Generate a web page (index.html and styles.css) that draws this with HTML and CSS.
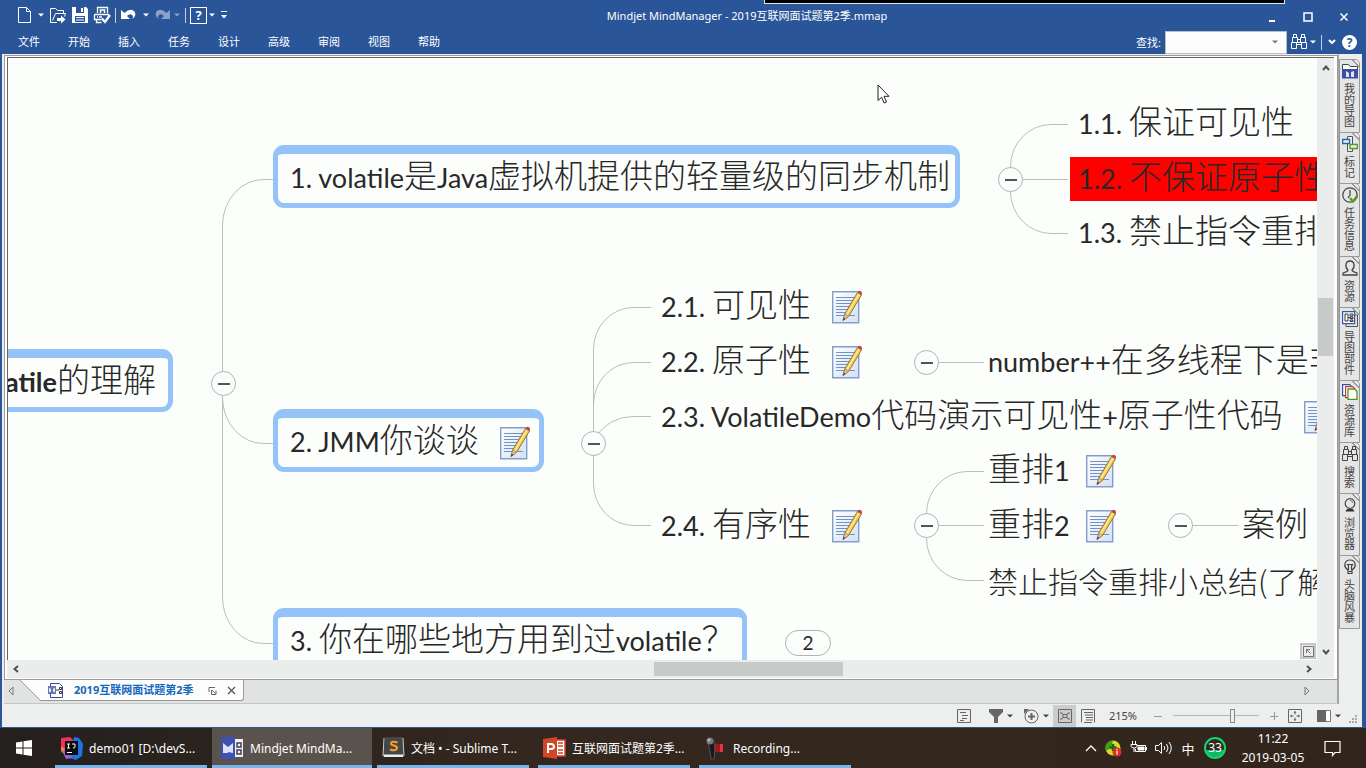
FILE: index.html
```html
<!DOCTYPE html>
<html lang="zh-CN">
<head>
<meta charset="utf-8">
<title>Mindjet MindManager - 2019互联网面试题第2季.mmap</title>
<link rel="stylesheet" href="styles.css">
</head>
<body>
<svg class="defs" aria-hidden="true">
  <defs>
    <linearGradient id="paper" x1="0" y1="0" x2="1" y2="1"><stop offset="0" stop-color="#fff"/><stop offset="1" stop-color="#d5e0f2"/></linearGradient>
    <symbol id="note" viewBox="0 0 30 34">
      <path d="M.7 1.7h26v31H.7z" fill="url(#paper)" stroke="#819fcb" stroke-width="1.4"/>
      <path d="M4 7.500h19M4 10.500h19M4 13.500h18M4 16.500h17M4 19.500h14M4 22.500h11M4 25.500h19" stroke="#6e92ca" stroke-width="1.200"/>
      <path d="M11 30.500l2-7L25.500 2.500l4 2.500L16.500 26.500z" fill="#f2ce55" stroke="#8a6a2c" stroke-width=".9"/>
      <path d="M14.500 25L27 4" stroke="#fff0a0" stroke-width="1.200"/>
      <path d="M11 30.500l2-7 3.500 3z" fill="#e3c49c" stroke="#8a6a4c" stroke-width=".6"/>
      <path d="M11 30.500l.8-2.800 1.500 1.200z" fill="#333"/>
      <path d="M25.500 2.500q1.500-2.800 3.500-1.300 1.700 1.300.5 3.800z" fill="#cf4040"/>
    </symbol>
    <symbol id="bino" viewBox="0 0 16 16">
      <path d="M2.500.500h3v3h-3zM10.500.500h3v3h-3zM1.500 3.500h5v5h-5zM9.500 3.500h5v5h-5zM.5 8.500h5v6h-5zM10.500 8.500h5v6h-5zM6 5.500h4M6 10.500h4M5.500 8.500h5" fill="none" stroke="currentColor"/>
    </symbol>
    <symbol id="drop" viewBox="0 0 6 4"><path d="M0 .5h6L3 3.500z" fill="currentColor"/></symbol>
  </defs>
</svg>

<header class="top">
  <div class="titlebar">
    <div class="quick">
      <button class="ic" aria-label="新建"><svg width="16" height="18"><path d="M1.500 1.500h8l4 4v11h-12zM9.500 1.500v4h4" fill="none" stroke="#fff"/></svg></button>
      <button class="ic dd" aria-label="新建选项"><svg width="6" height="4"><use href="#drop"/></svg></button>
      <button class="ic" aria-label="打开"><svg width="18" height="18"><path d="M8 16.500H1.500v-14h5l2 2h6v3M3.500 14.500l3-7h10l-1 3" fill="none" stroke="#fff"/><path d="M8 12h4V9.500l4.500 4-4.500 4V15H8z" fill="#fff"/></svg></button>
      <button class="ic" aria-label="保存"><svg width="18" height="18"><path d="M1 1h14l2 2v14H1z" fill="#fff"/><path d="M5 1h8v6H5zM4 10h10v6H4z" fill="#2a5699"/><path d="M10 2h2v4h-2zM5 11h8v1H5zM5 13.500h8v1H5z" fill="#fff"/></svg></button>
      <button class="ic" aria-label="打印"><svg width="18" height="18"><path d="M4.500 7V1.500h10V7M1.500 8.500v5h7M1.500 8.500h14v3M3.500 13.500v3h5M4 11h1M6 11h3" fill="none" stroke="#fff" stroke-width="1.300"/><path d="M7.500 7V4h4v3" fill="none" stroke="#fff" stroke-width="1.500"/><path d="M9 12.500l3 3.500 5-7" fill="none" stroke="#fff" stroke-width="2.200"/></svg></button>
      <span class="bar"></span>
      <button class="ic" aria-label="撤销"><svg width="18" height="16"><path d="M1 3v9h9L7 9q3-3 5-1 2 1.500 0 4 5-3 2.500-7.500-4-4-10 1.500z" fill="#fff"/></svg></button>
      <button class="ic dd" aria-label="撤销列表"><svg width="6" height="4"><use href="#drop"/></svg></button>
      <button class="ic dim" aria-label="重做"><svg width="18" height="16"><path d="M16 3v9H7l3-3Q7 6 5 8q-2 1.500 0 4-5-3-2.500-7.500 4-4 10 1.500z" fill="#fff"/></svg></button>
      <button class="ic dd tight dim" aria-label="重做列表"><svg width="6" height="4"><use href="#drop"/></svg></button>
      <span class="bar"></span>
      <button class="ic help" aria-label="帮助选项">?</button>
      <button class="ic dd tight" aria-label="帮助列表"><svg width="6" height="4"><use href="#drop"/></svg></button>
      <button class="ic dd" aria-label="自定义工具栏"><svg width="6" height="8"><path d="M0 .5h6" stroke="#fff"/><path d="M0 4h6L3 7.500z" fill="#fff"/></svg></button>
    </div>
    <h1 class="title">Mindjet MindManager - 2019互联网面试题第2季.mmap</h1>
    <div class="winbtns">
      <button class="ic" aria-label="最小化"><svg width="12" height="12"><path d="M3 10h6" stroke="#fff" stroke-width="2"/></svg></button>
      <button class="ic" aria-label="最大化"><svg width="12" height="12"><path d="M2 2h8v8H2z" fill="none" stroke="#fff" stroke-width="1.500"/></svg></button>
      <button class="ic" aria-label="关闭"><svg width="12" height="12"><path d="M2.500 2.500l7 7M9.500 2.500l-7 7" stroke="#fff" stroke-width="1.500"/></svg></button>
    </div>
    <div class="notch"></div>
  </div>
  <div class="menurow">
    <nav class="menus">
      <button>文件</button><button>开始</button><button>插入</button><button>任务</button><button>设计</button><button>高级</button><button>审阅</button><button>视图</button><button>帮助</button>
    </nav>
    <div class="find">
      <label for="q">查找:</label>
      <div class="combo"><input id="q" type="text"><button aria-label="查找记录"><svg width="6" height="4"><use href="#drop"/></svg></button></div>
      <button class="ic" aria-label="查找"><svg width="16" height="16"><use href="#bino"/></svg></button>
      <button class="ic dd" aria-label="查找选项"><svg width="6" height="4"><use href="#drop"/></svg></button>
      <span class="bar"></span>
      <button class="ic chev" aria-label="折叠功能区"><svg width="8" height="8"><path d="M1 2l3 3 3-3" fill="none" stroke="#fff" stroke-width="2"/></svg></button>
      <button class="ic round" aria-label="帮助">?</button>
    </div>
  </div>
</header>

<div class="window">
  <main class="doc">
    <div class="frame">
      <div class="canvas">
        <svg class="lines" width="1400" height="700" aria-hidden="true">
          <g transform="translate(-8 -58)" fill="none" stroke="#bcbdbd">
            <path d="M274 179.500H264A41 46 0 0 0 222.500 225V597A41 46 0 0 0 264 643.500H274M222.500 398A41 46 0 0 0 264 443.500H274"/>
            <path d="M651 307.500H633A40 42 0 0 0 593.500 349V484A40 42 0 0 0 633 525.500H651M651 362.500H633A40 42 0 0 0 593.500 404M651 416.500H633Q608 416.500 593.500 440"/>
            <path d="M1068 124.500H1051A41 42 0 0 0 1010.500 166V192A41 42 0 0 0 1051 233.500H1068M1010 179.500H1068"/>
            <path d="M927 362.500H984"/>
            <path d="M984 471.500H967A41 42 0 0 0 926.500 513V538A41 42 0 0 0 967 580.500H984M927 525.500H984M1181 525.500H1238"/>
          </g>
        </svg>

        <div class="node box root"><span><b>volatile</b>的理解</span></div>
        <div class="node box n1"><span><i>1. volatile</i>是<i>Java</i>虚拟机提供的轻量级的同步机制</span></div>
        <div class="node box n2"><span><i>2. JMM</i>你谈谈</span><svg class="note" width="30" height="34"><use href="#note"/></svg></div>
        <div class="node box n3"><span><i>3. </i>你在哪些地方用到过<i>volatile</i>？</span></div>

        <div class="node leaf n11"><span><i>1.1. </i>保证可见性</span></div>
        <div class="node leaf n12"><span><i>1.2. </i>不保证原子性</span></div>
        <div class="node leaf n13"><span><i>1.3. </i>禁止指令重排</span></div>
        <div class="node leaf n21"><span><i>2.1. </i>可见性</span><svg class="note" width="30" height="34"><use href="#note"/></svg></div>
        <div class="node leaf n22"><span><i>2.2. </i>原子性</span><svg class="note" width="30" height="34"><use href="#note"/></svg></div>
        <div class="node leaf n23"><span><i>2.3. VolatileDemo</i>代码演示可见性<i>+</i>原子性代码</span><svg class="note" width="30" height="34"><use href="#note"/></svg></div>
        <div class="node leaf n24"><span><i>2.4. </i>有序性</span><svg class="note" width="30" height="34"><use href="#note"/></svg></div>
        <div class="node leaf n221"><span><i>number++</i>在多线程下是非</span></div>
        <div class="node leaf n241"><span>重排<i>1</i></span><svg class="note near" width="30" height="34"><use href="#note"/></svg></div>
        <div class="node leaf n242"><span>重排<i>2</i></span><svg class="note near" width="30" height="34"><use href="#note"/></svg></div>
        <div class="node leaf n2421"><span>案例</span></div>
        <div class="node leaf small n243"><span>禁止指令重排小总结(了解</span></div>

        <button class="toggle t0" aria-label="折叠"></button>
        <button class="toggle t1" aria-label="折叠"></button>
        <button class="toggle t2" aria-label="折叠"></button>
        <button class="toggle t22" aria-label="折叠"></button>
        <button class="toggle t24" aria-label="折叠"></button>
        <button class="toggle t242" aria-label="折叠"></button>
        <button class="count">2</button>
        <svg class="cursor" width="13" height="21" aria-hidden="true"><path d="M1 1v15.500l3.600-3.300 2.500 5.800 2.400-1-2.500-5.700H12z" fill="#fff" stroke="#222"/></svg>
        <button class="pan" aria-label="概览"><svg width="11" height="11"><path d="M.5.500h10v10H.5zM3.500 7V3.500H7M3.500 3.500l4 4" fill="none" stroke="#777"/></svg></button>
      </div>
      <div class="vscroll"><svg width="10" height="8"><path d="M2 6l3-3.500L8 6" fill="none" stroke="#505050" stroke-width="2"/></svg><span></span><svg width="10" height="8"><path d="M2 2l3 3.500L8 2" fill="none" stroke="#505050" stroke-width="2"/></svg></div>
      <div class="hscroll"><svg width="8" height="10"><path d="M6 2L2.500 5 6 8" fill="none" stroke="#505050" stroke-width="2"/></svg><span></span><svg width="8" height="10"><path d="M2 2l3.500 3L2 8" fill="none" stroke="#505050" stroke-width="2"/></svg></div>
    </div>
    <div class="tabs">
      <button class="ic" aria-label="上一个"><svg width="6" height="10"><path d="M5 1v8L1 5z" fill="none" stroke="#777"/></svg></button>
      <div class="tab">
        <svg class="slant" width="21" height="21" aria-hidden="true"><path d="M0 0h21v21z" fill="#fcfdfc"/><path d="M0 0l21 21" stroke="#999"/></svg>
        <div class="tabin">
          <svg width="16" height="17"><path d="M2.500 1.500h9l3 3v11h-12z" fill="#fff" stroke="#304a93"/><path d="M0 4h8v8H0z" fill="#6474b4"/><path d="M1 5.500v5l2-1V7zM7 5.500v5l-2-1V7z" fill="#e6eaf6"/><path d="M8 8h3M11.500 5.500h2v2h-2zM11.500 9.500h2v2h-2z" fill="none" stroke="#333"/></svg>
          <strong>2019互联网面试题第2季</strong>
          <button class="ic pop" aria-label="弹出"><svg width="9" height="9"><path d="M1 6V1.500h6M3.500 4v4.500H8V4.500M4 4l3.500 3.500" fill="none" stroke="#666"/></svg></button>
          <button class="ic" aria-label="关闭标签"><svg width="9" height="9"><path d="M1 1l7 7M8 1L1 8" stroke="#555" stroke-width="1.300"/></svg></button>
        </div>
      </div>
      <button class="ic nexttab" aria-label="下一个"><svg width="6" height="10"><path d="M1 1v8l4-4z" fill="none" stroke="#777"/></svg></button>
    </div>
  </main>
  <aside class="side">
    <button><svg width="16" height="16" viewBox="0 0 16 16"><path d="M.5 14V1.500h6l1.500 2h7.500V14" fill="#fff" stroke="#444"/><path d="M0 6h16v9.500H0z" fill="#3a50a5"/><path d="M4 8l3 2v4H4zM9 9l3-1v6H9z" fill="#dfe4f5"/></svg><span>我的导图</span></button>
    <button><svg width="16" height="16" viewBox="0 0 16 16"><path d="M5.500.500h5v15h-5z" fill="#eee" stroke="#555"/><path d="M.6 3.500h7v4h-7z" fill="#eee" stroke="#2b63b5" stroke-width="1.400"/><path d="M8 8.500h7.400v4H8z" fill="#eee" stroke="#5c9a1f" stroke-width="1.400"/></svg><span>标记</span></button>
    <button><svg width="16" height="16" viewBox="0 0 16 16" fill="none"><circle cx="8" cy="8" r="7.200" stroke="#444" stroke-width="1.200"/><path d="M8 3v5l-2 3" stroke="#444" stroke-width="1.200"/><path d="M8 11l3 3.500 4.500-6" stroke="#5c9a1f" stroke-width="2.200"/></svg><span>任务信息</span></button>
    <button><svg width="16" height="16" viewBox="0 0 16 16"><path d="M6 10C2.500 7 3.500 1 8 1s5.500 6 2 9q0 1.500 5 3v2H1v-2q5-1.500 5-3z" fill="none" stroke="#444" stroke-width="1.300"/></svg><span>资源</span></button>
    <button><svg width="16" height="16" viewBox="0 0 16 16" fill="none"><path d="M4 13v2.500h11.500V4H13" stroke="#555"/><path d="M.6.600h12v12H.6z" fill="#fff" stroke="#3159a5" stroke-width="1.200"/><path d="M3 3h3v7H3zM6 6.500h2M8 3h3v2H8zM8 6h3v1.500H8zM8 9h3v1.500H8z" stroke="#333"/></svg><span>导图部件</span></button>
    <button><svg width="16" height="16" viewBox="0 0 16 16"><path d="M.6.600h7l2 2v9h-9z" fill="#fff" stroke="#2857a8" stroke-width="1.200"/><path d="M3.600 2.600h7l2 2v9h-9z" fill="#fff" stroke="#cc3b30" stroke-width="1.200"/><path d="M6 5h6.500l2.500 2.500v8H6z" fill="#fff" stroke="#58951e" stroke-width="1.300"/></svg><span>资源库</span></button>
    <button><svg width="16" height="16"><use href="#bino"/></svg><span>搜索</span></button>
    <button><svg width="16" height="16" viewBox="0 0 16 16" fill="none"><circle cx="8" cy="6.500" r="4.800" stroke="#444" stroke-width="1.200"/><path d="M8 3.500q2.500 0 3 2.500" stroke="#777"/><path d="M5 12h6l1.500 2.500h-9z" fill="#333"/></svg><span>浏览器</span></button>
    <button><svg width="16" height="16" viewBox="0 0 16 16" fill="none" stroke="#444" stroke-width="1.200"><path d="M6 11Q2.500 8.500 2.800 5.500 3.500 1 8 1t5.200 4.500Q13.500 8.500 10 11v3.500H6zM6 12.500h4M6.500 11V7L5.500 5.500h5L9.500 7v4"/></svg><span>头脑风暴</span></button>
  </aside>
</div>

<footer class="status">
  <button class="ic outline" aria-label="大纲"><svg width="14" height="14"><path d="M.5.500h13v13H.5zM3 3.500h6M5 6.500h6M5 9.500h5M3 11.500h4" fill="none" stroke="#666"/></svg></button>
  <button class="ic wide" aria-label="筛选"><svg width="14" height="14"><path d="M0 0h14v3L9 8v6H5V8L0 3z" fill="#666"/></svg><svg width="6" height="4"><use href="#drop"/></svg></button>
  <button class="ic wide" aria-label="详细程度"><svg width="16" height="16" fill="none" stroke="#666"><circle cx="8.500" cy="8.500" r="6.500"/><path d="M8.500 5v7M5 8.500h7" stroke-width="2"/><path d="M1 6V1h5z" fill="#666" stroke="none"/></svg><svg width="6" height="4"><use href="#drop"/></svg></button>
  <button class="ic on" aria-label="导图视图"><svg width="14" height="14" fill="none" stroke="#666"><path d="M.5.500h13v13H.5zM5 5.500h4v3H5zM2 4h2l1 1.500M12 4h-2L9 5.500M2 10h2l1-1.500M12 10h-2L9 8.500"/></svg></button>
  <button class="ic" aria-label="大纲视图"><svg width="14" height="14" fill="none" stroke="#666"><path d="M.5 13.500V.5h13v13M3 3.500h9M4 6h8M5 8.500h7M5 11h7M3 13.500h8"/></svg></button>
  <span class="pct">215%</span>
  <button class="ic sign" aria-label="缩小"><svg width="8" height="8"><path d="M0 4.500h8" stroke="#999"/></svg></button>
  <input class="zoom" type="range" min="0" max="100" value="70" aria-label="缩放">
  <button class="ic sign" aria-label="放大"><svg width="8" height="8"><path d="M0 4.500h8M4.500 0v8" stroke="#999"/></svg></button>
  <button class="ic fit" aria-label="适合窗口"><svg width="14" height="14" fill="none" stroke="#666"><path d="M.5.500h13v13H.5zM7 2.500v3M7 8.500v3M2.500 7h3M8.500 7h3M6 4l1-1.500L8 4M6 10l1 1.500L8 10M4 6L2.500 7 4 8M10 6l1.500 1L10 8"/></svg></button>
  <button class="ic panes" aria-label="任务窗格"><svg width="14" height="14"><path d="M.5 1.500h13v11H.5z" fill="#fff" stroke="#777"/><path d="M0 1h9v12H0z" fill="#666"/></svg><svg width="6" height="4"><use href="#drop"/></svg></button>
  <svg class="grip" width="8" height="8" fill="#aaa"><path d="M6 0h2v2H6zM3 3h2v2H3zM6 3h2v2H6zM0 6h2v2H0zM3 6h2v2H3zM6 6h2v2H6z"/></svg>
</footer>

<div class="taskbar">
  <button class="start" aria-label="开始菜单"><svg width="16" height="16"><path d="M0 2.500l6.500-1v6H0zM7.500 1.300L16 0v7.500H7.500zM0 8.500h6.500v6L0 13.600zM7.500 8.500H16V16l-8.500-1.200z" fill="#fff"/></svg></button>
  <button class="app"><svg width="24" height="24"><path d="M1 2l9-1 6 6-7 8-8-3z" fill="#f0325f"/><path d="M14 1l5 1 4 6-1 12-6 4-6-2z" fill="#1d74e8"/><path d="M1 13l6-1 5 10-6 1z" fill="#9a62c5"/><path d="M1 10l4 3-3 4-1-3z" fill="#f0863d"/><path d="M5 5h13v14H5z" fill="#0b0b0d"/><path d="M7 8h3M8.500 8v4M7 12h3M12 8h3v3q0 1-2 1M7 16.500h5" fill="none" stroke="#fff"/></svg><span>demo01 [D:\devS...</span></button>
  <button class="app active"><svg width="24" height="24"><path d="M0 1h14v20l2 2H0z" fill="#3f51b0"/><path d="M14 3h8v18h-8z" fill="#f2f2f5"/><path d="M2 7l5 4v6H2zM7 11l5-4v10l-5-1z" fill="#dde1f2"/><path d="M16 7h4v4h-4zM16 14h4v4h-4z" fill="none" stroke="#3a3f55" stroke-width="1.500"/></svg><span>Mindjet MindMa...</span></button>
  <button class="app"><svg width="24" height="24"><path d="M3 1h18l1 20H1z" fill="#444748"/><path d="M1.500 18.500h20L21 21H2z" fill="#e9ecec"/><path d="M2 2L1 20M21 2l1 18" stroke="#c9cccc"/><path d="M15.500 6.500q-6-2-6.500 1 0 1.500 3 2 3.500 1 3 3-1.500 3-7 1" fill="none" stroke="#ff9a2a" stroke-width="2"/></svg><span>文档 • - Sublime T...</span></button>
  <button class="app"><svg width="24" height="24"><path d="M12 4h10v16H12z" fill="#fff" stroke="#d24625" stroke-width="1.500"/><path d="M15 7h5M15 10h5M15 14h5M15 17h5" stroke="#d24625" stroke-width="1.500"/><path d="M0 3l14-2v22L0 21z" fill="#d24625"/><path d="M5 17V8h3q3 0 3 2.500T8 13H5" fill="none" stroke="#fff" stroke-width="2"/></svg><span>互联网面试题第2季...</span></button>
  <button class="app"><svg width="24" height="24"><path d="M10 8h9v8h-9z" fill="#a51620"/><path d="M16 8h3v8h-3z" fill="#e33541"/><path d="M4 6l6-1 1 8-1 10H7l-1-7z" fill="#17181a" stroke="#555"/><circle cx="6" cy="5" r="3.500" fill="#73777b"/><circle cx="5" cy="4" r="1.500" fill="#b9bcc0"/></svg><span>Recording...</span></button>
  <div class="tray">
    <svg width="12" height="8"><path d="M1 7l5-5 5 5" fill="none" stroke="#fff" stroke-width="1.300"/></svg>
    <svg width="17" height="17"><circle cx="8" cy="8" r="7.500" fill="#d6df25"/><path d="M1 11a7.500 7.500 0 0 1 1-8q2-2 6-2.500L6 8z" fill="#3f9d20"/><path d="M8 4v7M4.500 7.500h7" stroke="#17691a" stroke-width="2.500"/><circle cx="12" cy="12" r="4.500" fill="#e02b20"/><path d="M12 11v3.500M12 9v1.200" stroke="#fff" stroke-width="1.300"/></svg>
    <svg width="17" height="14" fill="none" stroke="#fff"><path d="M7 4.500h8.500v6H5.500V8M16.500 6v3M2.500 0v3M5.500 0v3M1 3.500h6v2L5 7H3L1 5.500zM4 7v4"/><path d="M8 6h6v3H8z" fill="#fff"/></svg>
    <svg width="17" height="14" fill="none" stroke="#fff"><path d="M.5 4.500h3l3-3v11l-3-3h-3zM9 5q1.500 2 0 4M11.500 3q3 4 0 8M14 1q4.500 6 0 12"/></svg>
    <span class="ime">中</span>
    <span class="badge33">33</span>
    <time class="clock"><span>11:22</span><span>2019-03-05</span></time>
    <svg width="17" height="17"><path d="M1 1.500h15v11h-5l-2.500 3v-3H1z" fill="none" stroke="#fff" stroke-width="1.200"/></svg>
  </div>
</div>
</body>
</html>
```
FILE: styles.css
```css
* { box-sizing: border-box; }
html, body { height: 100%; margin: 0; }
body {
  display: flex;
  flex-direction: column;
  overflow: hidden;
  background: #2b579a;
  font-family: "Noto Sans", "Noto Sans CJK SC", sans-serif;
  font-size: 11px;
  color: #222;
}
button { font: inherit; color: inherit; background: none; border: 0; padding: 0; }
svg { display: block; flex: none; }
.defs { position: absolute; width: 0; height: 0; }
.ic { display: flex; align-items: center; justify-content: center; }

/* title bar and menu */
.top { flex: none; background: #2a5699; color: #fff; }
.titlebar {
  position: relative;
  display: flex;
  align-items: center;
  height: 30px;
}
.quick { display: flex; align-items: center; gap: 4px; padding-left: 17px; }
.quick .dd { width: 8px; }
.quick .tight { margin-left: -3px; }
.bar { width: 1px; height: 15px; background: #c4d1e6; }
.dim { opacity: .45; }
.help { width: 17px; height: 17px; border: 1px solid #fff; font-size: 13px; font-weight: 700; }
.title { flex: 1; margin: 0; padding-top: 2px; font-size: 11px; font-weight: 400; line-height: 16px; white-space: nowrap; text-align: center; }
.winbtns { display: flex; justify-content: flex-end; gap: 24px; padding: 3px 16px 0 0; }
.notch {
  position: absolute;
  top: 0;
  right: 81px;
  width: 521px;
  height: 4px;
  background: #000;
  border: 1px solid #dfe8ee;
  border-top: 0;
}
.menurow { display: flex; justify-content: space-between; align-items: center; height: 24px; padding-right: 9px; }
.menus { display: flex; padding-left: 4px; }
.menus button { width: 50px; line-height: 20px; }
.find { display: flex; align-items: center; gap: 4px; }
.combo { display: flex; width: 122px; height: 23px; background: #fcfdfc; border: 1px solid #b6bfcc; color: #777; }
.combo input { flex: 1; min-width: 0; border: 0; background: none; font: inherit; outline: 0; }
.combo button { width: 14px; }
.find .dd { width: 8px; margin-left: -2px; }
.chev { width: 12px; }
.round { width: 15px; height: 15px; border-radius: 50%; background: #fff; color: #2a5699; font-weight: 700; font-size: 12px; line-height: 15px; }

/* work area */
.window {
  flex: 1;
  min-height: 0;
  display: flex;
  margin: 0 4px 0 2px;
  background: #edeeee;
}
.doc { flex: 1; min-width: 0; display: flex; flex-direction: column; padding-left: 2px; }
.frame {
  flex: 1;
  min-height: 0;
  display: grid;
  grid-template-columns: 1fr 17px;
  grid-template-rows: 1fr 18px;
  margin-top: 1px;
  border: 1px solid #9b9b9b;
  padding: 1px 3px 1px 2px;
  background: #fff;
}
.canvas {
  position: relative;
  overflow: hidden;
  background: #fcfefc;
  border-left: 1px solid #666;
  border-top: 1px solid #666;
  color: #282828;
}
.vscroll, .hscroll { display: flex; align-items: center; background: #ebecec; }
.vscroll { flex-direction: column; padding: 6px 0 4px; justify-content: space-between; border-top: 1px solid #666; }
.vscroll span { width: 15px; height: 58px; margin-bottom: 66px; background: #c8caca; }
.hscroll { grid-column: 1 / -1; justify-content: space-between; padding: 0 21px 0 5px; }
.hscroll span { width: 189px; height: 14px; margin-left: 171px; background: #c8caca; }

/* map */
.lines { position: absolute; left: 0; top: 0; }
.node {
  position: absolute;
  display: flex;
  align-items: center;
  font-family: "Noto Sans CJK SC", sans-serif;
  font-size: 33px;
  font-weight: 300;
  line-height: 38px;
  white-space: nowrap;
}
.node span { padding-bottom: 5px; }
.node i, .node b { font-family: Lato, sans-serif; font-style: normal; font-size: 27px; font-weight: 400; white-space: pre; }
.node b { font-weight: 700; }
.small { font-size: 30px; }
.note { margin-left: 21px; }
.note.near { margin-left: 16px; }
.box {
  height: 63px;
  padding: 0 12px;
  background: #fcfefc;
  border: 5px solid #94c4f7;
  border-top-width: 9px;
  border-radius: 11px;
}
.root { left: -136px; top: 291px; width: 301px; justify-content: flex-end; }
.n1 { left: 265px; top: 87px; width: 687px; }
.n2 { left: 265px; top: 351px; width: 271px; }
.n3 { left: 265px; top: 550px; width: 474px; }
.leaf { height: 44px; padding-left: 8px; }
.n11, .n12, .n13 { left: 1062px; }
.n11 { top: 44px; }
.n12 { top: 99px; width: 320px; background: #fe0000; }
.n13 { top: 153px; }
.n21, .n22, .n23, .n24 { left: 645px; }
.n21 { top: 227px; }
.n22 { top: 282px; }
.n23 { top: 337px; }
.n24 { top: 446px; }
.n221, .n241, .n242, .n243 { left: 972px; }
.n221 { top: 282px; }
.n241 { top: 391px; }
.n242 { top: 446px; }
.n243 { top: 502px; }
.n2421 { left: 1226px; top: 444px; }
.toggle {
  position: absolute;
  width: 25px;
  height: 25px;
  display: grid;
  place-items: center;
  border: 1px solid #b2b3b3;
  border-radius: 50%;
  background: #fcfefc;
}
.toggle::before { content: ""; width: 12px; height: 2px; background: #555; }
.t0 { left: 203px; top: 313px; }
.t1 { left: 990px; top: 109px; }
.t2 { left: 573px; top: 373px; }
.t22 { left: 906px; top: 292px; }
.t24 { left: 906px; top: 455px; }
.t242 { left: 1160px; top: 455px; }
.count {
  position: absolute;
  left: 777px;
  top: 572px;
  width: 46px;
  height: 26px;
  border: 1px solid #b2b3b3;
  border-radius: 13px;
  font-family: Lato, sans-serif;
  font-size: 19px;
  line-height: 24px;
}
.cursor { position: absolute; left: 869px; top: 26px; }
.pan {
  position: absolute;
  right: 1px;
  bottom: 1px;
  width: 16px;
  height: 16px;
  display: grid;
  place-items: center;
  background: #e9eaea;
  border: 2px solid #c5c6c6;
}

/* document tabs */
.tabs { display: flex; align-items: flex-start; height: 24px; background: #e1e2e2; border-bottom: 1px solid #c5c6c6; border-right: 1px solid #a5a5a5; }
.tabs > .ic { width: 14px; height: 22px; }
.nexttab { margin-left: auto; margin-right: 23px; }
.tab { display: flex; margin-left: 2px; }
.tabin {
  display: flex;
  align-items: center;
  height: 21px;
  padding: 0 7px;
  background: #fcfdfc;
  border-right: 1px solid #999;
  border-bottom: 1px solid #999;
  border-radius: 0 0 3px 0;
}
.tabin strong { margin: 0 15px 0 10px; color: #1566bd; font-size: 11px; line-height: 16px; }
.pop { margin-right: 10px; }

/* side tabs */
.side { flex: none; width: 24px; padding-top: 5px; border-left: 1px solid #a5a5a5; }
.side button {
  display: flex;
  flex-direction: column;
  align-items: center;
  gap: 4px;
  width: 21px;
  margin-bottom: -1px;
  padding: 3px 0 5px;
  background: linear-gradient(225deg, #edeeee 4px, #999 4px, #999 5px, #e4e5e5 5px);
  border: 1px solid #999;
  border-radius: 0 5px 0 0;
  color: #444;
}
.side span { writing-mode: vertical-rl; font-size: 11px; line-height: 16px; font-family: "Noto Sans CJK SC", sans-serif; }

/* status bar */
.status {
  flex: none;
  display: flex;
  align-items: center;
  justify-content: flex-end;
  height: 23px;
  margin: 0 4px 1px 2px;
  padding-right: 5px;
  background: #edeeee;
  color: #444;
}
.status .ic { width: 23px; height: 22px; }
.status .outline { margin-right: 8px; }
.status .wide { width: 35px; gap: 4px; }
.status .panes { width: 40px; gap: 4px; }
.status .on { background: #cbcccc; }
.pct { width: 48px; text-align: center; line-height: 16px; }
.status .sign { width: 22px; }
.zoom { appearance: none; width: 86px; height: 16px; margin: 0 4px; background: linear-gradient(#b5b6b6, #b5b6b6) center / 100% 1px no-repeat; }
.zoom::-webkit-slider-thumb { appearance: none; width: 5px; height: 14px; background: #edeeee; border: 1px solid #888; }
.status .fit { margin: 0 3px 0 -2px; }
.grip { margin-top: 6px; }

/* taskbar */
.taskbar { flex: none; display: flex; height: 40px; background: linear-gradient(90deg, #24201d, #33271f 35%, #32261c); color: #fff; font-size: 12px; }
.start { width: 48px; display: grid; place-items: center; margin-right: 3px; }
.app {
  display: flex;
  align-items: center;
  gap: 5px;
  width: 160px;
  padding: 0 4px 0 9px;
  overflow: hidden;
  white-space: nowrap;
  background: linear-gradient(#75b5ee, #75b5ee) center bottom / 152px 3px no-repeat;
}
.app + .app { margin-left: 1px; }
.app.active { background: linear-gradient(#75b5ee, #75b5ee) bottom / 100% 3px no-repeat #5a534d; }
.tray { display: flex; align-items: center; gap: 8px; margin-left: auto; padding-right: 25px; }
.ime { font-size: 13px; width: 16px; text-align: center; }
.badge33 { width: 22px; height: 22px; border: 2px solid #12d673; border-radius: 50%; background: linear-gradient(#33281f 60%, #12b868 60%); font-size: 12px; line-height: 18px; text-align: center; }
.clock { display: flex; flex-direction: column; align-items: center; width: 74px; margin: 0 6px 0 2px; line-height: 19px; }
```
